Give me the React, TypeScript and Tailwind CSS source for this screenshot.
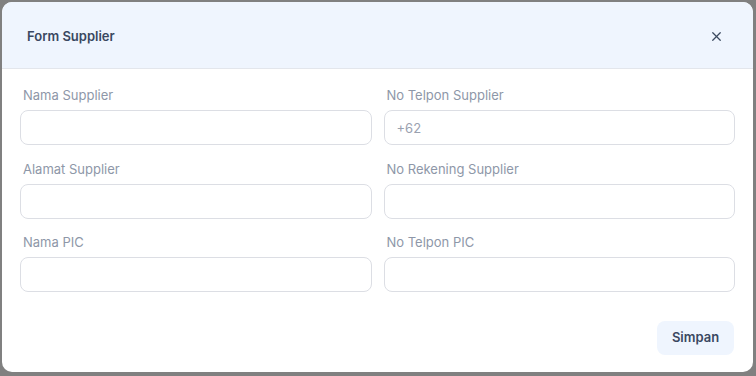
import { X } from "lucide-react";

type Field = {
  label: string;
  placeholder?: string;
};

const fields: Field[] = [
  { label: "Nama Supplier" },
  { label: "No Telpon Supplier", placeholder: "+62" },
  { label: "Alamat Supplier" },
  { label: "No Rekening Supplier" },
  { label: "Nama PIC" },
  { label: "No Telpon PIC" },
];

function FormField({ label, placeholder }: Field) {
  return (
    <label className="flex flex-col">
      <span className="h-5 pl-[3px] text-[13px] leading-5 text-[#8e97a8]">{label}</span>
      <input
        placeholder={placeholder}
        className="mt-[5px] h-[35px] w-full rounded-lg border border-[#dcdee4] bg-white px-3 text-[13px] text-slate-700 outline-none placeholder:text-[#9aa1b0]"
      />
    </label>
  );
}

export default function App() {
  return (
    <div
      className="h-[376px] w-[756px] bg-[#808080] pt-[2px] pl-[2px]"
      style={{ fontFamily: '"Inter", "Noto Sans", sans-serif' }}
    >
      <div className="flex h-[370px] w-[751px] flex-col overflow-hidden rounded-[10px] bg-white">
        <div className="flex h-[67px] shrink-0 items-center justify-between border-b border-[#e3e6ec] bg-[#eff5fe] pt-[3px] pr-[29px] pl-[25px]">
          <h2 className="text-[13px] font-semibold text-[#3a4861]">Form Supplier</h2>
          <button type="button" className="text-[#3b4a60]">
            <X size={15} strokeWidth={2} />
          </button>
        </div>

        <div className="grid grid-cols-2 gap-x-3 gap-y-[13.5px] px-[18px] pt-[16px]">
          {fields.map((field) => (
            <FormField key={field.label} {...field} />
          ))}
        </div>

        <div className="flex justify-end px-[19px] pt-[29px]">
          <button
            type="button"
            className="h-[34px] w-[77px] rounded-lg bg-[#eff5fe] text-[13px] font-semibold text-[#3a4861]"
          >
            Simpan
          </button>
        </div>
      </div>
    </div>
  );
}
